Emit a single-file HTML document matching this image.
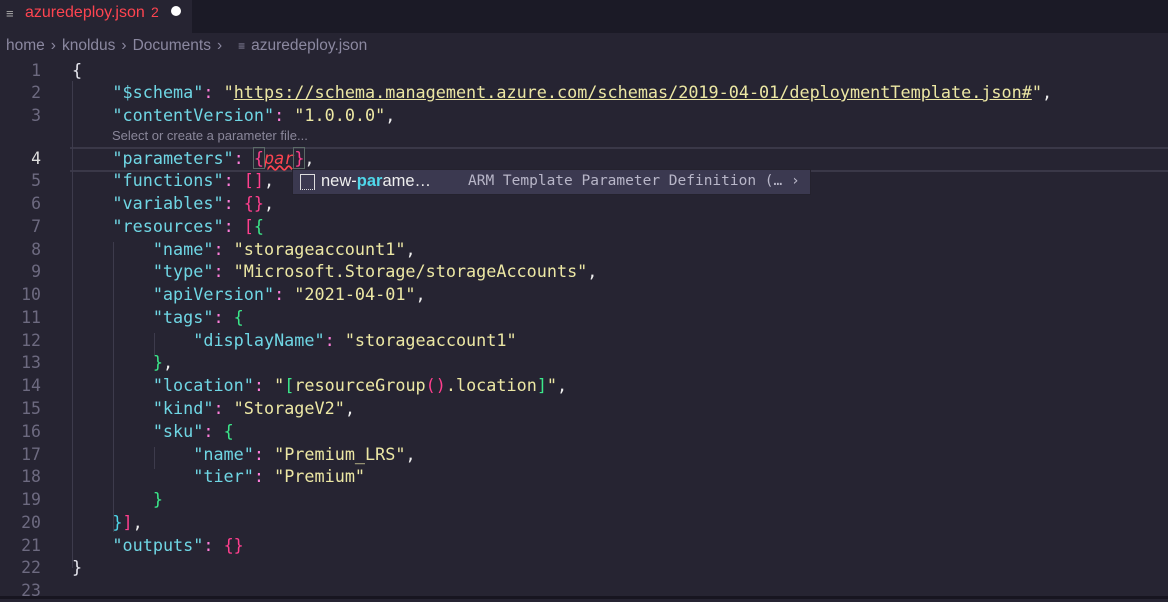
<!DOCTYPE html><html><head><style>
body{margin:0;width:1168px;height:599px;background:#262432;overflow:hidden;position:relative;font-family:"Liberation Sans",sans-serif}
.tabbar{position:absolute;left:0;top:0;width:1168px;height:33px;background:#1b1a26}
.tab{position:absolute;left:0;top:0;width:192px;height:33px;background:#262432;color:#fe4450;font-size:16px}
.bc{position:absolute;top:37px;left:6px;color:#8b88a0;font-size:15.5px}
.ch{display:inline-block;margin:0 6px;color:#8b88a0}
.ln{position:absolute;width:41px;text-align:right;color:#6d6a80;font-family:"DejaVu Sans Mono",monospace;font-size:16.5px;height:23px;line-height:23px}
.l{position:absolute;left:72px;height:23px;line-height:23px;font-family:"DejaVu Sans Mono",monospace;font-size:16.8px;white-space:pre;color:#eee}
.k{color:#6fd6e4}.s{color:#ece7a4}.c{color:#ff7edb}.p{color:#ff3f8e}.g{color:#3be88a}.w{color:#e8e8f0}.cy{color:#4fd7ea}
.gd{position:absolute;width:1px;background:#3d3b4c}
</style></head><body>
<div class="tabbar"><div class="tab"><span style="position:absolute;left:6px;top:6px;color:#aaa;font-size:13px">≡</span><span style="position:absolute;left:25px;top:4px">azuredeploy.json</span><span style="position:absolute;left:151px;top:4px;font-size:14px">2</span><span style="position:absolute;left:171px;top:6px;width:10px;height:10px;border-radius:50%;background:#fff"></span></div></div>
<div class="bc">home<span class="ch">›</span>knoldus<span class="ch">›</span>Documents<span class="ch">›</span><span style="font-size:12px;margin:0 6px 0 10px">≡</span>azuredeploy.json</div>
<div style="position:absolute;left:70px;top:147px;width:1098px;height:21px;border-top:2px solid #3a3848;border-bottom:2px solid #3a3848"></div>
<div class="gd" style="left:72px;top:81px;height:487px"></div>
<div class="gd" style="left:113px;top:242px;height:290px"></div>
<div class="gd" style="left:154px;top:333px;height:22px"></div>
<div class="gd" style="left:154px;top:447px;height:22px"></div>
<div style="position:absolute;left:112px;top:128px;color:#8a879a;font-size:13px">Select or create a parameter file...</div>
<div class="ln" style="top:59px">1</div><div class="l" style="top:59px"><span class="w">{</span></div>
<div class="ln" style="top:81px">2</div><div class="l" style="top:81px">    <span class="k">"$schema"</span><span class="c">:</span> <span class="s">"<span style="text-decoration:underline">https://schema.management.azure.com/schemas/2019-04-01/deploymentTemplate.json#</span>"</span>,</div>
<div class="ln" style="top:104px">3</div><div class="l" style="top:104px">    <span class="k">"contentVersion"</span><span class="c">:</span> <span class="s">"1.0.0.0"</span>,</div>
<div class="ln" style="top:147px;color:#ddd">4</div><div class="l" style="top:147px">    <span class="k">"parameters"</span><span class="c">:</span> <span class="p" style="outline:1px solid #5a6a66">{</span><span style="color:#fe4450;font-style:italic;text-decoration:underline wavy #fe4450">par</span><span class="p" style="outline:1px solid #5a6a66">}</span>,</div>
<div class="ln" style="top:169px">5</div><div class="l" style="top:169px">    <span class="k">"functions"</span><span class="c">:</span> <span class="p">[]</span>,</div>
<div class="ln" style="top:192px">6</div><div class="l" style="top:192px">    <span class="k">"variables"</span><span class="c">:</span> <span class="p">{}</span>,</div>
<div class="ln" style="top:215px">7</div><div class="l" style="top:215px">    <span class="k">"resources"</span><span class="c">:</span> <span class="p">[</span><span class="g">{</span></div>
<div class="ln" style="top:238px">8</div><div class="l" style="top:238px">        <span class="k">"name"</span><span class="c">:</span> <span class="s">"storageaccount1"</span>,</div>
<div class="ln" style="top:260px">9</div><div class="l" style="top:260px">        <span class="k">"type"</span><span class="c">:</span> <span class="s">"Microsoft.Storage/storageAccounts"</span>,</div>
<div class="ln" style="top:283px">10</div><div class="l" style="top:283px">        <span class="k">"apiVersion"</span><span class="c">:</span> <span class="s">"2021-04-01"</span>,</div>
<div class="ln" style="top:306px">11</div><div class="l" style="top:306px">        <span class="k">"tags"</span><span class="c">:</span> <span class="g">{</span></div>
<div class="ln" style="top:329px">12</div><div class="l" style="top:329px">            <span class="k">"displayName"</span><span class="c">:</span> <span class="s">"storageaccount1"</span></div>
<div class="ln" style="top:351px">13</div><div class="l" style="top:351px">        <span class="g">}</span>,</div>
<div class="ln" style="top:374px">14</div><div class="l" style="top:374px">        <span class="k">"location"</span><span class="c">:</span> <span class="s">"<span class="g">[</span>resourceGroup<span class="p">()</span>.location<span class="g">]</span>"</span>,</div>
<div class="ln" style="top:397px">15</div><div class="l" style="top:397px">        <span class="k">"kind"</span><span class="c">:</span> <span class="s">"StorageV2"</span>,</div>
<div class="ln" style="top:420px">16</div><div class="l" style="top:420px">        <span class="k">"sku"</span><span class="c">:</span> <span class="g">{</span></div>
<div class="ln" style="top:443px">17</div><div class="l" style="top:443px">            <span class="k">"name"</span><span class="c">:</span> <span class="s">"Premium_LRS"</span>,</div>
<div class="ln" style="top:465px">18</div><div class="l" style="top:465px">            <span class="k">"tier"</span><span class="c">:</span> <span class="s">"Premium"</span></div>
<div class="ln" style="top:488px">19</div><div class="l" style="top:488px">        <span class="g">}</span></div>
<div class="ln" style="top:511px">20</div><div class="l" style="top:511px">    <span class="cy">}</span><span class="p">]</span>,</div>
<div class="ln" style="top:534px">21</div><div class="l" style="top:534px">    <span class="k">"outputs"</span><span class="c">:</span> <span class="p">{}</span></div>
<div class="ln" style="top:556px">22</div><div class="l" style="top:556px"><span class="w">}</span></div>
<div class="ln" style="top:579px">23</div>
<div style="position:absolute;left:0;top:596px;width:1168px;height:3px;background:#171520"></div>
<div style="position:absolute;left:292px;top:169px;width:517px;height:24px;background:#3b3950;border:1px solid #24222e">
<span style="position:absolute;left:7px;top:4px;width:13px;height:14px;border:1px solid #ddd;border-bottom-style:dotted"></span>
<span style="position:absolute;left:28px;top:2px;font-size:16.5px;color:#eee">new-<b style="color:#4fd7ea">par</b>ame…</span>
<span style="position:absolute;left:175px;top:3px;font-family:'DejaVu Sans Mono',monospace;font-size:14.5px;color:#b8b6c8">ARM Template Parameter Definition (… ›</span>
</div>
</body></html>
